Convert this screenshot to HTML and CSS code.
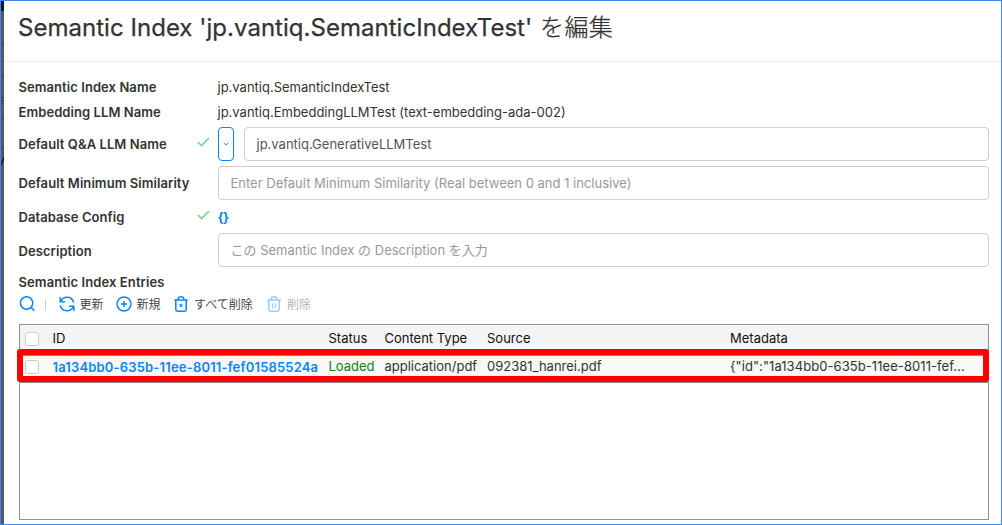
FILE: index.html
```
<!DOCTYPE html>
<html lang="ja">
<head>
<meta charset="utf-8">
<title>Semantic Index</title>
<link rel="stylesheet" href="styles.css">
</head>
<body>
<div class="frame">
  <div class="backdrop"><svg class="behind" viewBox="0 0 3 523"><path class="rule" d="M0 42.5h3M0 75.5h3M0 96.5h3M0 99.5h3M0 102.5h3M0 117.5h3M0 146.5h3"/><path class="slash" d="M0 164 4 154"/></svg></div>
  <main class="dialog">
    <header class="header"><h1 class="title">Semantic Index 'jp.vantiq.SemanticIndexTest' <span class="title-ja">を編集</span></h1></header>
    <section class="form">
      <div class="row row-name"><span class="label">Semantic Index Name</span><span class="value">jp.vantiq.SemanticIndexTest</span></div>
      <div class="row row-embed"><span class="label">Embedding LLM Name</span><span class="value">jp.vantiq.EmbeddingLLMTest (text-embedding-ada-002)</span></div>
      <div class="row row-qa"><span class="label">Default Q&amp;A LLM Name</span>
        <svg class="check" viewBox="0 0 13 10"><path d="M1 5 4.5 8.5 12 1"/></svg>
        <button class="picker"><svg viewBox="0 0 6 4"><path d="M.6.7 3 3 5.4.7"/></svg></button>
        <div class="field filled">jp.vantiq.GenerativeLLMTest</div></div>
      <div class="row row-sim"><span class="label">Default Minimum Similarity</span><div class="field">Enter Default Minimum Similarity (Real between 0 and 1 inclusive)</div></div>
      <div class="row row-db"><span class="label">Database Config</span>
        <svg class="check" viewBox="0 0 13 10"><path d="M1 5 4.5 8.5 12 1"/></svg>
        <span class="braces">{}</span></div>
      <div class="row row-desc"><span class="label">Description</span><div class="field">この Semantic Index の Description を入力</div></div>
    </section>
    <h2 class="subtitle">Semantic Index Entries</h2>
    <nav class="toolbar">
      <svg class="icon search" viewBox="0 0 16 16"><circle cx="7.6" cy="7" r="6.2"/><path d="m12 11.4 3.4 3.2"/></svg>
      <span class="divider"></span>
      <span class="tool refresh"><svg class="icon" viewBox="0 0 16 16"><path d="M1.2 1v4.7h4.7M1.5 5.5C3 2.6 5.2 1.2 8 1.2c3.5 0 6 2.2 6.7 5.4M14.8 15v-4.7h-4.7M14.5 10.5C13 13.4 10.8 14.8 8 14.8c-3.5 0-6-2.2-6.7-5.4"/></svg><span class="tool-text">更新</span></span>
      <span class="tool create"><svg class="icon" viewBox="0 0 16 16"><circle cx="8" cy="8" r="7"/><path d="M8 5v6M5 8h6"/></svg><span class="tool-text">新規</span></span>
      <span class="tool delete-all"><svg class="icon" viewBox="0 0 16 16"><path d="M1.2 4h13.6M2.8 4v9.5q0 1.7 1.7 1.7h7q1.7 0 1.7-1.7V4M5.2 4V2.4q0-1.5 1.5-1.5h2.6q1.5 0 1.5 1.5V4"/><path class="thin" d="m6.7 8.2 2.6 2.6m0-2.6-2.6 2.6"/></svg><span class="tool-text">すべて削除</span></span>
      <span class="tool delete disabled"><svg class="icon" viewBox="0 0 16 16"><path d="M1.2 4h13.6M2.8 4v9.5q0 1.7 1.7 1.7h7q1.7 0 1.7-1.7V4M5.2 4V2.4q0-1.5 1.5-1.5h2.6q1.5 0 1.5 1.5V4"/><path class="thin" d="M6.5 7.2v5M9.5 7.2v5"/></svg><span class="tool-text">削除</span></span>
    </nav>
    <section class="table">
      <div class="tr head"><span><i class="box"></i></span><span>ID</span><span>Status</span><span>Content Type</span><span>Source</span><span>Metadata</span></div>
      <div class="tr entry"><span><i class="box"></i></span><span class="id">1a134bb0-635b-11ee-8011-fef01585524a</span><span class="loaded">Loaded</span><span>application/pdf</span><span>092381_hanrei.pdf</span><span class="meta">{"id":"1a134bb0-635b-11ee-8011-fef...</span></div>
      <div class="highlight"></div>
    </section>
  </main>
</div>
</body>
</html>
```
FILE: styles.css
```
* { box-sizing: border-box; }
body { margin: 0; font: 13px/20px Inter, "Noto Sans CJK JP", sans-serif; color: #333; }
.frame { width: 1002px; height: 525px; border: 1px solid #4285f4; display: flex; overflow: hidden; background: #fff; }
.backdrop { width: 3px; flex: none; background: linear-gradient(#0e1a24 10px, #56585b 10px); overflow: hidden; }
.behind { display: block; width: 3px; height: 523px; fill: none; }
.rule { stroke: #3f4144; }
.slash { stroke: #111; stroke-width: 1.3; }
.dialog { flex: 1; min-width: 0; display: flex; flex-direction: column; }
.header { height: 61px; border-bottom: 1px solid #eee; padding: 9px 0 0 14px; }
.title { margin: 0; font-size: 24px; line-height: 36px; font-weight: 400; letter-spacing: .03px; white-space: nowrap; -webkit-text-stroke: .25px #333; }
.title-ja { font-weight: 300; letter-spacing: .4px; margin-left: 1px; }
.form { padding: 12px 12px 0 15px; }
.row { display: flex; align-items: center; white-space: nowrap; }
.label { width: 199px; flex: none; font-weight: 600; letter-spacing: .07px; text-indent: -.5px; }
.value { text-indent: -.5px; }
.row-name, .row-embed { height: 25px; }
.row-embed { margin-bottom: 2px; }
.row-qa { height: 36px; }
.row-sim { height: 41px; }
.row-db { height: 28px; }
.row-desc { height: 38px; }
.row-desc .label { padding-top: 2px; }
.field { flex: 1; height: 34px; border: 1px solid #ccced5; border-radius: 4px; padding: 6px 11.5px; color: #999; }
.filled { color: #555; }
.check { width: 13px; height: 10px; margin: -4px 8px 0 -21px; fill: none; stroke: #78d588; stroke-width: 1.6; }
.picker { width: 16px; height: 34px; padding: 0; margin-right: 10px; display: flex; align-items: center; justify-content: center; border: 1px solid #0a84ff; border-radius: 4px; background: #fff; }
.picker svg { width: 6px; height: 4px; fill: none; stroke: #278fff; }
.braces { color: #0a84ff; font-weight: 700; letter-spacing: -.6px; text-indent: -.5px; }
.subtitle { margin: 3px 0 0 14.5px; font-size: 13px; line-height: 20px; font-weight: 600; letter-spacing: .1px; }
.toolbar { height: 32px; display: flex; align-items: center; padding: 0 0 8px 15px; white-space: nowrap; }
.icon { width: 16px; height: 16px; flex: none; fill: none; stroke: #0a84ff; stroke-width: 1.5; }
.search { margin-top: -1px; }
.thin { stroke-width: 1.2; }
.divider { width: 1px; height: 11px; background: #ccc; margin: 0 12.5px 0 10px; }
.tool { display: flex; align-items: center; gap: 5px; font-size: 12px; }
.tool-text { padding-top: 1px; font-weight: 350; color: #3a3a3a; }
.refresh { width: 57px; }
.create { width: 57.5px; }
.delete-all { width: 93px; }
.disabled { opacity: .42; }
.table { position: relative; margin: 0 12px 0 15px; height: 196px; border: 1px solid #929292; }
.tr { display: grid; grid-template-columns: 32.5px 276px 56px 102.5px 243px 1fr; align-items: start; white-space: nowrap; }
.head { height: 31px; padding-top: 3px; background: #f4f4f4; color: #111; border-bottom: 1px solid #888; }
.head .box { margin-top: 4px; }
.entry { height: 27px; background: #f8f8f8; border-bottom: 1px solid #888; }
.entry .box { margin-top: 4px; }
.box { display: block; width: 14px; height: 14px; margin-left: 5px; border: 1px solid #ccc; border-radius: 3px; background: #fff; }
.id { color: #0a84ff; font-weight: 600; letter-spacing: .175px; padding-top: 1px; }
.meta { letter-spacing: .07px; }
.loaded { color: #128012; }
.highlight { position: absolute; left: -3px; top: 24px; width: 972px; height: 33px; border: 6px solid #f00; border-radius: 3px; }
```
